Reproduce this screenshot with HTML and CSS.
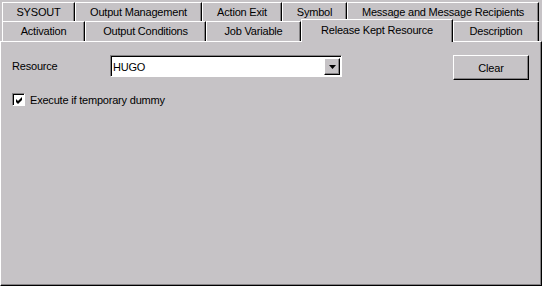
FILE: index.html
```html
<!DOCTYPE html>
<html lang="en">
<head>
    <meta charset="UTF-8">
    <title>Release Kept Resource</title>
    <link rel="stylesheet" href="styles.css">
</head>
<body>
    <div class="dialog">
        <div class="tabs">
            <div class="tab-row">
                <div class="tab w-sysout">SYSOUT</div>
                <div class="tab w-outmgmt">Output Management</div>
                <div class="tab w-action">Action Exit</div>
                <div class="tab w-symbol">Symbol</div>
                <div class="tab w-message">Message and Message Recipients</div>
            </div>
            <div class="tab-row">
                <div class="tab w-activation">Activation</div>
                <div class="tab w-outcond">Output Conditions</div>
                <div class="tab w-jobvar">Job Variable</div>
                <div class="tab active w-release">Release Kept Resource</div>
                <div class="tab w-desc">Description</div>
            </div>
        </div>

        <div class="panel">
            <div class="field-row">
                <label class="field-label" for="resource">Resource</label>
                <div class="combo">
                    <input type="text" id="resource" class="combo-text" value="HUGO">
                    <span class="combo-btn">
                        <svg width="7" height="4" viewBox="0 0 7 4"><polygon points="0,0 7,0 3.5,4" fill="#000"/></svg>
                    </span>
                </div>
                <button type="button" class="btn">Clear</button>
            </div>
            <div class="check-row">
                <span class="checkbox">
                    <svg width="7" height="7" viewBox="0 0 7 7"><polygon points="0,2 2,4 6,0 6,3 2,7 0,5" fill="#000"/></svg>
                </span>
                <span class="check-label">Execute if temporary dummy</span>
            </div>
        </div>
    </div>
</body>
</html>
```

FILE: styles.css
```css
body {
    margin: 0;
    padding: 0;
    background: #c6c3c6;
    font-family: "Liberation Sans", Arial, sans-serif;
    font-size: 11px;
    letter-spacing: -0.2px;
    color: #000;
}
.dialog {
    width: 542px;
    height: 286px;
    display: flex;
    flex-direction: column;
    background: #c6c3c6;
}
.tabs {
    padding: 2px 0 0 2px;
    height: 39px;
    position: relative;
    z-index: 1;
}
.tab-row {
    display: flex;
    height: 19px;
}
.tab-row + .tab-row {
    height: 20px;
}
.tab {
    box-sizing: border-box;
    text-align: center;
    line-height: 19px;
    border-top: 1px solid #fff;
    border-left: 1px solid #fff;
    border-right: 1px solid #000;
    box-shadow: inset -1px 0 0 #848284;
    background: #c6c3c6;
    white-space: nowrap;
}
.tab.active {
    margin-top: -2px;
    height: 23px;
    line-height: 20px;
}
.w-sysout { width: 73px; }
.w-outmgmt { width: 127px; }
.w-action { width: 80px; }
.w-symbol { width: 65px; }
.w-message { width: 192px; }
.w-activation { width: 83px; }
.w-outcond { width: 121px; }
.w-jobvar { width: 95px; }
.w-release { width: 152px; }
.w-desc { width: 86px; }
.panel {
    flex: 1;
    box-sizing: border-box;
    border-top: 1px solid #fff;
    border-left: 1px solid #fff;
    border-right: 1px solid #000;
    border-bottom: 1px solid #000;
    box-shadow: inset -1px -1px 0 #848284;
    padding: 13px 0 0 11px;
}
.field-row {
    display: flex;
    align-items: flex-start;
}
.field-label {
    width: 98px;
    margin-top: 5px;
}
.combo {
    display: flex;
    width: 232px;
    height: 22px;
    box-sizing: border-box;
    border-top: 1px solid #848284;
    border-left: 1px solid #848284;
    border-right: 1px solid #fff;
    border-bottom: 1px solid #fff;
    box-shadow: inset 1px 1px 0 #000;
    background: #fff;
    padding: 2px 1px 1px 2px;
}
.combo-text {
    flex: 1;
    border: none;
    outline: none;
    padding: 0;
    font: inherit;
    letter-spacing: inherit;
    color: #000;
    background: transparent;
    min-width: 0;
}
.combo-btn {
    width: 16px;
    height: 17px;
    box-sizing: border-box;
    background: #c6c3c6;
    border-top: 1px solid #fff;
    border-left: 1px solid #fff;
    border-right: 1px solid #000;
    border-bottom: 1px solid #000;
    box-shadow: inset -1px -1px 0 #848284;
    display: flex;
    align-items: center;
    justify-content: center;
}
.btn {
    margin-left: 111px;
    width: 76px;
    height: 25px;
    font: inherit;
    letter-spacing: inherit;
    color: #000;
    background: #c6c3c6;
    border-top: 1px solid #fff;
    border-left: 1px solid #fff;
    border-right: 1px solid #000;
    border-bottom: 1px solid #000;
    box-shadow: inset -1px -1px 0 #848284;
    padding: 0;
    cursor: pointer;
}
.check-row {
    display: flex;
    align-items: center;
    margin-top: 13px;
}
.checkbox {
    width: 13px;
    height: 13px;
    box-sizing: border-box;
    background: #fff;
    border-top: 1px solid #848284;
    border-left: 1px solid #848284;
    border-right: 1px solid #fff;
    border-bottom: 1px solid #fff;
    box-shadow: inset 1px 1px 0 #000;
    display: flex;
    align-items: center;
    justify-content: center;
    padding: 1px 0 0 1px;
}
.check-label {
    margin-left: 5px;
}
```
